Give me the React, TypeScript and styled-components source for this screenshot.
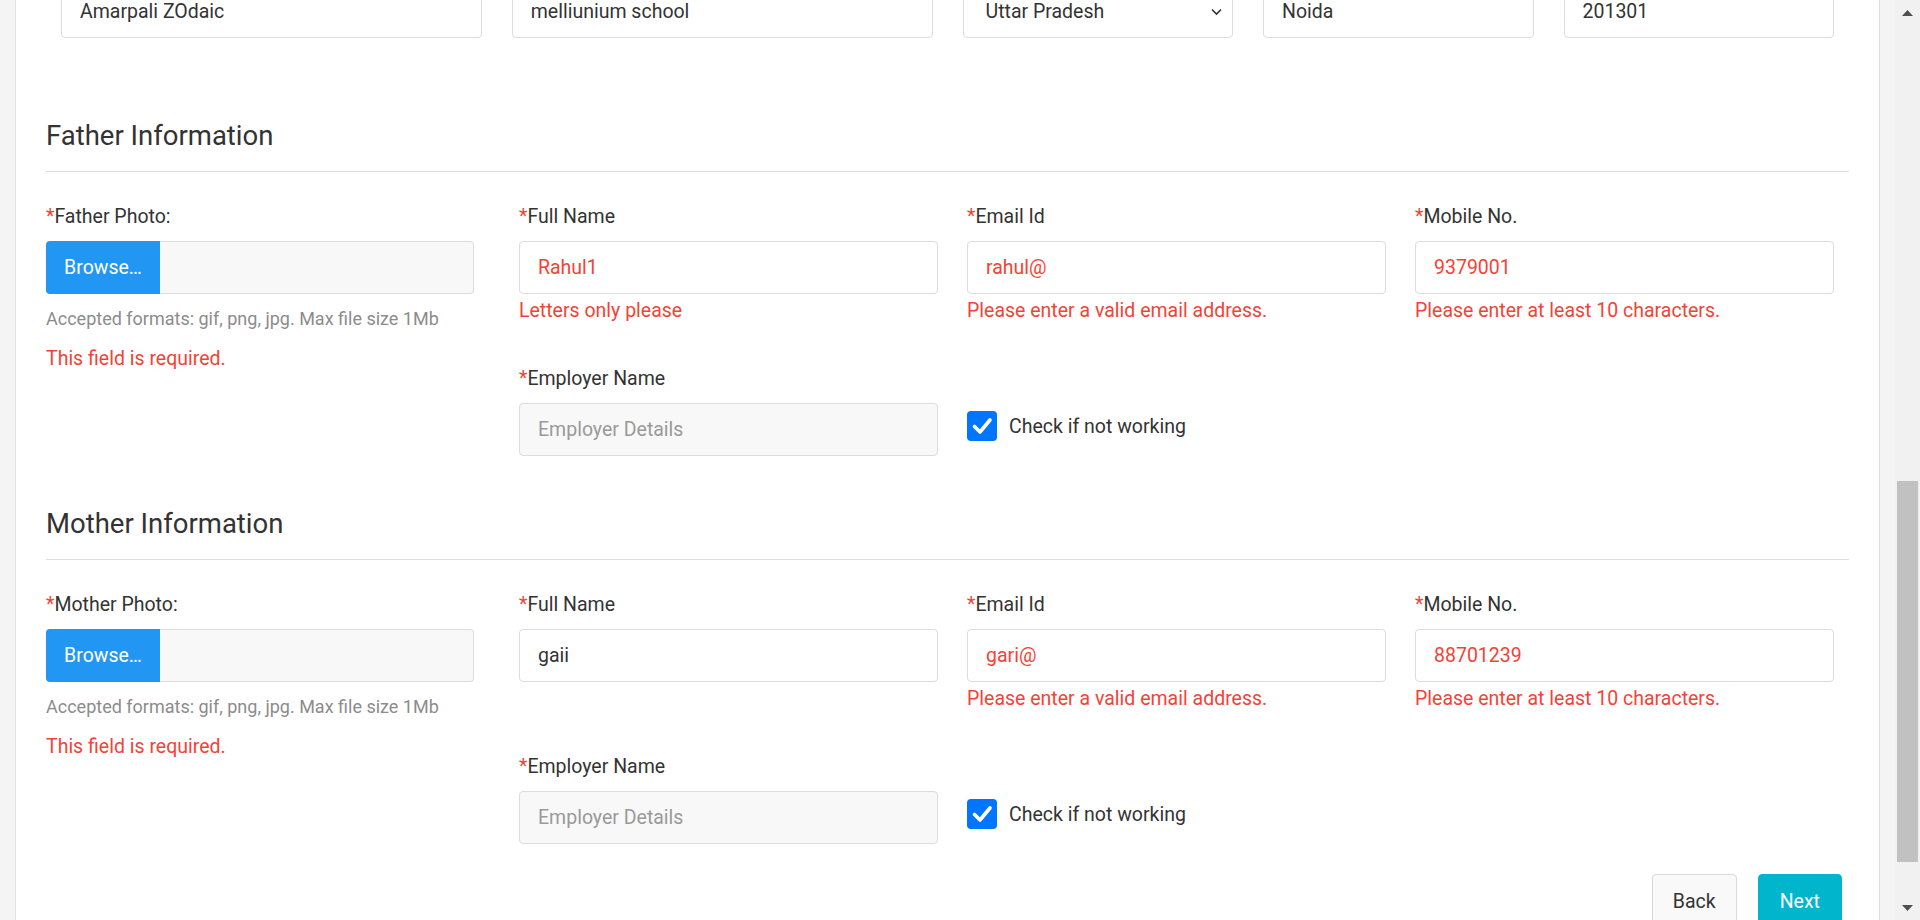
import React from "react";
import styled, { createGlobalStyle } from "styled-components";

const GlobalStyle = createGlobalStyle`
  html, body { margin: 0; padding: 0; height: 100%; }
  body {
    background: #f4f4f4;
    font-family: Roboto, "Liberation Sans", Arial, sans-serif;
    color: #333;
    overflow: hidden;
  }
  #root { height: 100%; }
  *, *::before, *::after { box-sizing: border-box; }
`;

const RED = "#f44336";

const Viewport = styled.div`
  display: flex;
  height: 920px;
  overflow: hidden;
`;

const PageArea = styled.div`
  flex: 1;
  min-width: 0;
  padding: 0 15px;
  overflow: hidden;
`;

const Card = styled.div`
  background: #fff;
  border-left: 1px solid #e2e2e2;
  border-right: 1px solid #dcdcdc;
  padding: 0 30px 20px;
  min-height: 100%;
`;

const TopRow = styled.div`
  display: grid;
  grid-template-columns: 3fr 3fr 2fr 2fr 2fr;
  margin-top: -15px;
`;

const TopCell = styled.div`
  padding: 0 15px;
  position: relative;
`;

const TextInput = styled.input<{ $invalid?: boolean; $muted?: boolean }>`
  display: block;
  width: 100%;
  height: 53px;
  padding: 0 18px;
  border: 1px solid #dcdcdc;
  border-radius: 4px;
  background: ${(p) => (p.$muted ? "#f8f8f8" : "#fff")};
  font-family: inherit;
  font-size: 19.5px;
  color: ${(p) => (p.$invalid ? RED : "#333")};
  outline: none;
  &::placeholder {
    color: #9a9a9a;
    opacity: 1;
  }
`;

const SelectBox = styled.select`
  display: block;
  width: 100%;
  height: 53px;
  padding: 0 40px 0 22px;
  border: 1px solid #dcdcdc;
  border-radius: 4px;
  background: #fff;
  font-family: inherit;
  font-size: 19.5px;
  color: #333;
  appearance: none;
  -webkit-appearance: none;
  outline: none;
`;

const Chevron = styled.svg`
  position: absolute;
  right: 26px;
  top: 50%;
  margin-top: -4px;
  width: 11px;
  height: 8px;
  pointer-events: none;
`;

const Section = styled.section<{ $first?: boolean }>`
  margin-top: ${(p) => (p.$first ? 81 : 51)}px;
`;

const SectionTitle = styled.h3`
  margin: 0;
  font-size: 27.5px;
  line-height: 33px;
  font-weight: 400;
  color: #333;
  padding-bottom: 19px;
  border-bottom: 1px solid #dedede;
`;

const SectionBody = styled.div`
  display: flex;
  margin-top: 30px;
`;

const PhotoCol = styled.div`
  flex: 0 0 428px;
`;

const FieldsGrid = styled.div`
  flex: 1;
  margin: 0 15px 0 45px;
  display: grid;
  grid-template-columns: repeat(3, 1fr);
  column-gap: 29px;
  row-gap: 39px;
  align-items: start;
`;

const Field = styled.div`
  display: flex;
  flex-direction: column;
`;

const Label = styled.label`
  display: block;
  font-size: 19.5px;
  line-height: 29px;
  color: #333;
  margin-bottom: 10px;
`;

const Req = styled.span`
  color: ${RED};
`;

const ErrorText = styled.div<{ $gap?: number }>`
  font-size: 19.5px;
  line-height: 29px;
  color: ${RED};
  margin-top: ${(p) => p.$gap ?? 2}px;
`;

const HelpText = styled.div`
  font-size: 18px;
  line-height: 24px;
  color: #8c8c8c;
  margin-top: 13px;
`;

const FileInput = styled.div`
  display: flex;
  height: 53px;
`;

const BrowseButton = styled.span`
  flex: 0 0 114px;
  display: flex;
  align-items: center;
  justify-content: center;
  background: #2196f3;
  color: #fff;
  font-size: 19.5px;
  border-radius: 4px 0 0 4px;
`;

const FileField = styled.div`
  flex: 1;
  background: #f8f8f8;
  border: 1px solid #dcdcdc;
  border-left: none;
  border-radius: 0 4px 4px 0;
`;

const CheckCell = styled.label`
  display: flex;
  align-items: center;
  gap: 12px;
  padding-top: 47px;
  font-size: 19.5px;
  line-height: 29px;
  color: #333;
`;

const CheckBox = styled.span`
  flex: 0 0 30px;
  width: 30px;
  height: 30px;
  border-radius: 4px;
  background: #0075ff;
  display: flex;
  align-items: center;
  justify-content: center;
`;

const Actions = styled.div`
  display: flex;
  justify-content: flex-end;
  gap: 21px;
  margin-top: 30px;
  padding-right: 7px;
`;

const Button = styled.button<{ $primary?: boolean }>`
  height: 54px;
  padding: 0 ${(p) => (p.$primary ? 21 : 20)}px;
  font-family: inherit;
  font-size: 19.5px;
  border-radius: 4px;
  border: 1px solid ${(p) => (p.$primary ? "#00b5cc" : "#d9d9d9")};
  background: ${(p) => (p.$primary ? "#00b5cc" : "#f9f9f9")};
  color: ${(p) => (p.$primary ? "#fff" : "#333")};
  cursor: pointer;
`;

const Scrollbar = styled.div`
  flex: 0 0 25px;
  background: #f1f1f1;
  display: flex;
  flex-direction: column;
`;

const ScrollArrow = styled.div`
  height: 25px;
  display: flex;
  align-items: center;
  justify-content: center;
`;

const ScrollTrack = styled.div`
  flex: 1;
  display: flex;
  flex-direction: column;
  padding: 0 2px;
`;

const ThumbGap = styled.div`
  height: 456px;
`;

const Thumb = styled.div`
  height: 381px;
  background: #c1c1c1;
`;

type FieldDef = {
  label: string;
  value: string;
  invalid?: boolean;
  error?: string;
};

type SectionDef = {
  title: string;
  photoLabel: string;
  fields: FieldDef[];
};

const sections: SectionDef[] = [
  {
    title: "Father Information",
    photoLabel: "Father Photo:",
    fields: [
      { label: "Full Name", value: "Rahul1", invalid: true, error: "Letters only please" },
      { label: "Email Id", value: "rahul@", invalid: true, error: "Please enter a valid email address." },
      { label: "Mobile No.", value: "9379001", invalid: true, error: "Please enter at least 10 characters." },
    ],
  },
  {
    title: "Mother Information",
    photoLabel: "Mother Photo:",
    fields: [
      { label: "Full Name", value: "gaii" },
      { label: "Email Id", value: "gari@", invalid: true, error: "Please enter a valid email address." },
      { label: "Mobile No.", value: "88701239", invalid: true, error: "Please enter at least 10 characters." },
    ],
  },
];

const CheckMark = () => (
  <svg width="22" height="22" viewBox="0 0 22 22">
    <path d="M3.5 11.5 L9 17 L19 5" fill="none" stroke="#fff" strokeWidth="3.6" strokeLinecap="round" strokeLinejoin="round" />
  </svg>
);

const ParentSection: React.FC<{ def: SectionDef; first?: boolean }> = ({ def, first }) => (
  <Section $first={first}>
    <SectionTitle>{def.title}</SectionTitle>
    <SectionBody>
      <PhotoCol>
        <Label>
          <Req>*</Req>
          {def.photoLabel}
        </Label>
        <FileInput>
          <BrowseButton>Browse…</BrowseButton>
          <FileField />
        </FileInput>
        <HelpText>Accepted formats: gif, png, jpg. Max file size 1Mb</HelpText>
        <ErrorText $gap={13}>This field is required.</ErrorText>
      </PhotoCol>
      <FieldsGrid>
        {def.fields.map((f) => (
          <Field key={f.label}>
            <Label>
              <Req>*</Req>
              {f.label}
            </Label>
            <TextInput defaultValue={f.value} readOnly $invalid={f.invalid} />
            {f.error && <ErrorText>{f.error}</ErrorText>}
          </Field>
        ))}
        <Field>
          <Label>
            <Req>*</Req>
            Employer Name
          </Label>
          <TextInput placeholder="Employer Details" disabled $muted />
        </Field>
        <CheckCell>
          <CheckBox>
            <CheckMark />
          </CheckBox>
          Check if not working
        </CheckCell>
      </FieldsGrid>
    </SectionBody>
  </Section>
);

export default function App() {
  return (
    <>
      <GlobalStyle />
      <Viewport>
        <PageArea>
          <Card>
            <TopRow>
              <TopCell>
                <TextInput defaultValue="Amarpali ZOdaic" readOnly />
              </TopCell>
              <TopCell>
                <TextInput defaultValue="melliunium school" readOnly />
              </TopCell>
              <TopCell>
                <SelectBox defaultValue="Uttar Pradesh">
                  <option>Uttar Pradesh</option>
                  <option>Delhi</option>
                  <option>Haryana</option>
                </SelectBox>
                <Chevron viewBox="0 0 11 8">
                  <path d="M1 1.5 L5.5 6 L10 1.5" fill="none" stroke="#333" strokeWidth="1.6" />
                </Chevron>
              </TopCell>
              <TopCell>
                <TextInput defaultValue="Noida" readOnly />
              </TopCell>
              <TopCell>
                <TextInput defaultValue="201301" readOnly />
              </TopCell>
            </TopRow>

            {sections.map((s, i) => (
              <ParentSection key={s.title} def={s} first={i === 0} />
            ))}

            <Actions>
              <Button type="button">Back</Button>
              <Button type="button" $primary>
                Next
              </Button>
            </Actions>
          </Card>
        </PageArea>
        <Scrollbar>
          <ScrollArrow>
            <svg width="11" height="6" viewBox="0 0 11 6">
              <path d="M0 6 L5.5 0 L11 6 Z" fill="#505050" />
            </svg>
          </ScrollArrow>
          <ScrollTrack>
            <ThumbGap />
            <Thumb />
          </ScrollTrack>
          <ScrollArrow>
            <svg width="11" height="6" viewBox="0 0 11 6">
              <path d="M0 0 L11 0 L5.5 6 Z" fill="#505050" />
            </svg>
          </ScrollArrow>
        </Scrollbar>
      </Viewport>
    </>
  );
}
